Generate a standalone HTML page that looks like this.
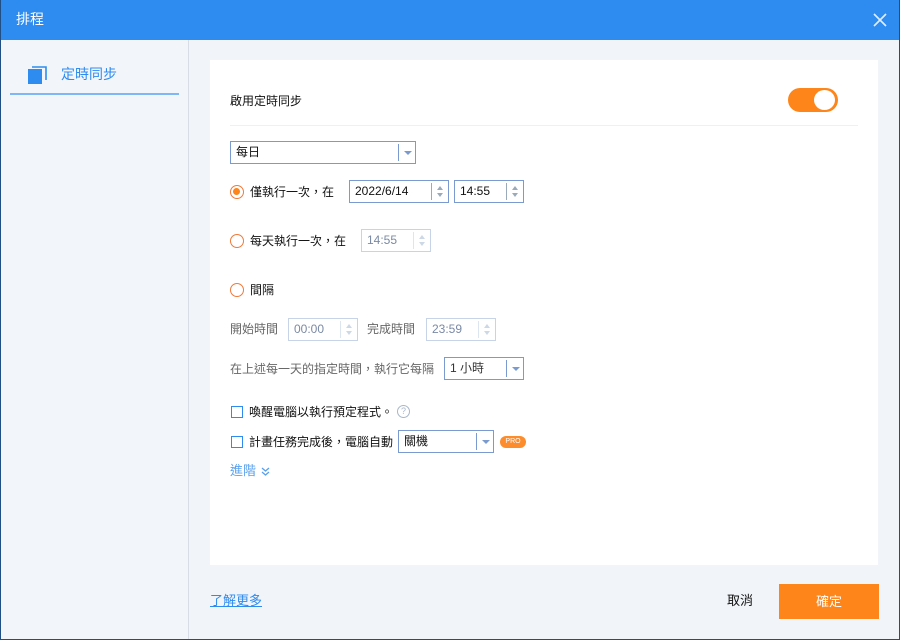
<!DOCTYPE html>
<html><head><meta charset="utf-8"><style>
*{margin:0;padding:0;box-sizing:border-box}
body{width:900px;height:640px;overflow:hidden;font-family:"Liberation Sans","Noto Sans CJK TC",sans-serif;font-size:12px;line-height:14px;color:#111;background:#f1f4f9;position:relative}
.a{position:absolute}
.win{position:absolute;left:0;top:0;width:900px;height:640px;border:1px solid #1f4f85;border-top:none}
.title{left:0;top:0;width:900px;height:40px;background:#2e8cf0;color:#fff;font-size:14px;line-height:38px;padding-left:16px}
.box{position:absolute;border:1px solid #7b9bd0;background:#fff;height:23px;line-height:21px;padding-left:5px}
.dis{border-color:#c7d4e8;color:#7a8aa5}
.sp{position:absolute;right:0;top:2px;bottom:2px;width:17px;border-left:1px solid #9ab}
.sp:before{content:"";position:absolute;left:5px;top:3px;border:3px solid transparent;border-bottom:4px solid #9ab;border-top:none}
.sp:after{content:"";position:absolute;left:5px;bottom:3px;border:3px solid transparent;border-top:4px solid #9ab;border-bottom:none}
.dis .sp{border-color:#dde5f0}.dis .sp:before{border-bottom-color:#cdd8e6}.dis .sp:after{border-top-color:#cdd8e6}
.dd{position:absolute;right:0;top:2px;bottom:2px;width:17px;border-left:1px solid #7b9bd0}
.dd:after{content:"";position:absolute;left:5px;top:7px;border:4px solid transparent;border-top:4px solid #7b9bd0;border-bottom:none}
.rad{position:absolute;width:14px;height:14px;border:1.5px solid #f07a3a;border-radius:50%}
.rad.on:after{content:"";position:absolute;left:2px;top:2px;width:7px;height:7px;border-radius:50%;background:#fd8519}
.chk{position:absolute;width:12px;height:12px;border:1.5px solid #2e8cf0}
.g{color:#666}
</style></head><body>
<div class="a title">排程</div>
<svg class="a" style="left:873px;top:13px" width="14" height="14"><path d="M1 1L13 13M13 1L1 13" stroke="#dfeeff" stroke-width="1.6"/></svg>
<div class="a" style="left:1px;top:40px;width:188px;height:599px;background:#f2f5fa;border-right:1px solid #d8dde5"></div>
<svg class="a" style="left:28px;top:66px" width="19" height="19"><rect x="0" y="3" width="14" height="15" fill="#2e8cf0"/><path d="M4 1H18V14" stroke="#2e8cf0" stroke-width="1.6" fill="none"/></svg>
<div class="a" style="left:61px;top:67px;font-size:14px;color:#2e8cf0">定時同步</div>
<div class="a" style="left:10px;top:93px;width:169px;height:2px;background:#7fb6f5"></div>
<div class="a" style="left:210px;top:60px;width:668px;height:505px;background:#fff"></div>
<div class="a" style="left:230px;top:94px">啟用定時同步</div>
<div class="a" style="left:788px;top:88px;width:50px;height:24px;border-radius:12px;background:#fd8519"></div>
<div class="a" style="left:814px;top:90px;width:21px;height:20px;border-radius:50%;background:#fff"></div>
<div class="a" style="left:230px;top:125px;width:628px;height:1px;background:#eef0f3"></div>
<div class="box" style="left:230px;top:141px;width:186px">每日<div class="dd"></div></div>
<div class="rad on" style="left:230px;top:185px"></div>
<div class="a" style="left:250px;top:185px">僅執行一次，在</div>
<div class="box" style="left:349px;top:180px;width:100px">2022/6/14<div class="sp"></div></div>
<div class="box" style="left:454px;top:180px;width:70px">14:55<div class="sp"></div></div>
<div class="rad" style="left:230px;top:234px"></div>
<div class="a" style="left:250px;top:234px">每天執行一次，在</div>
<div class="box dis" style="left:361px;top:229px;width:70px">14:55<div class="sp"></div></div>
<div class="rad" style="left:230px;top:283px"></div>
<div class="a" style="left:250px;top:283px">間隔</div>
<div class="a g" style="left:230px;top:322px">開始時間</div>
<div class="box dis" style="left:288px;top:318px;width:70px">00:00<div class="sp"></div></div>
<div class="a g" style="left:367px;top:322px">完成時間</div>
<div class="box dis" style="left:426px;top:318px;width:70px">23:59<div class="sp"></div></div>
<div class="a g" style="left:230px;top:362px">在上述每一天的指定時間，執行它每隔</div>
<div class="box" style="left:444px;top:357px;width:80px;color:#333">1 小時<div class="dd"></div></div>
<div class="chk" style="left:231px;top:406px"></div>
<div class="a" style="left:249px;top:405px">喚醒電腦以執行預定程式。</div>
<div class="a" style="left:397px;top:405px;width:13px;height:13px;border:1.3px solid #a9b6c8;border-radius:50%;color:#a9b6c8;font-size:9px;line-height:11px;text-align:center">?</div>
<div class="chk" style="left:231px;top:436px"></div>
<div class="a" style="left:249px;top:435px">計畫任務完成後，電腦自動</div>
<div class="box" style="left:398px;top:430px;width:96px">關機<div class="dd"></div></div>
<div class="a" style="left:500px;top:436px;width:26px;height:12px;border-radius:6px;background:#fd8c2c;color:#fff;font-size:7px;line-height:12px;text-align:center">PRO</div>
<div class="a" style="left:230px;top:464px;color:#5aa0ee;font-size:13px">進階</div>
<svg class="a" style="left:261px;top:467px" width="9" height="9"><path d="M1 1L4.5 4L8 1M1 5L4.5 8L8 5" stroke="#5aa0ee" stroke-width="1.3" fill="none"/></svg>
<div class="a" style="left:210px;top:594px;color:#2e8cf0;text-decoration:underline;font-size:13px">了解更多</div>
<div class="a" style="left:727px;top:594px;font-size:13px">取消</div>
<div class="a" style="left:779px;top:584px;width:100px;height:35px;background:#fd8519;color:#fff;font-size:13px;line-height:35px;text-align:center">確定</div>
<div class="win"></div>
</body></html>
